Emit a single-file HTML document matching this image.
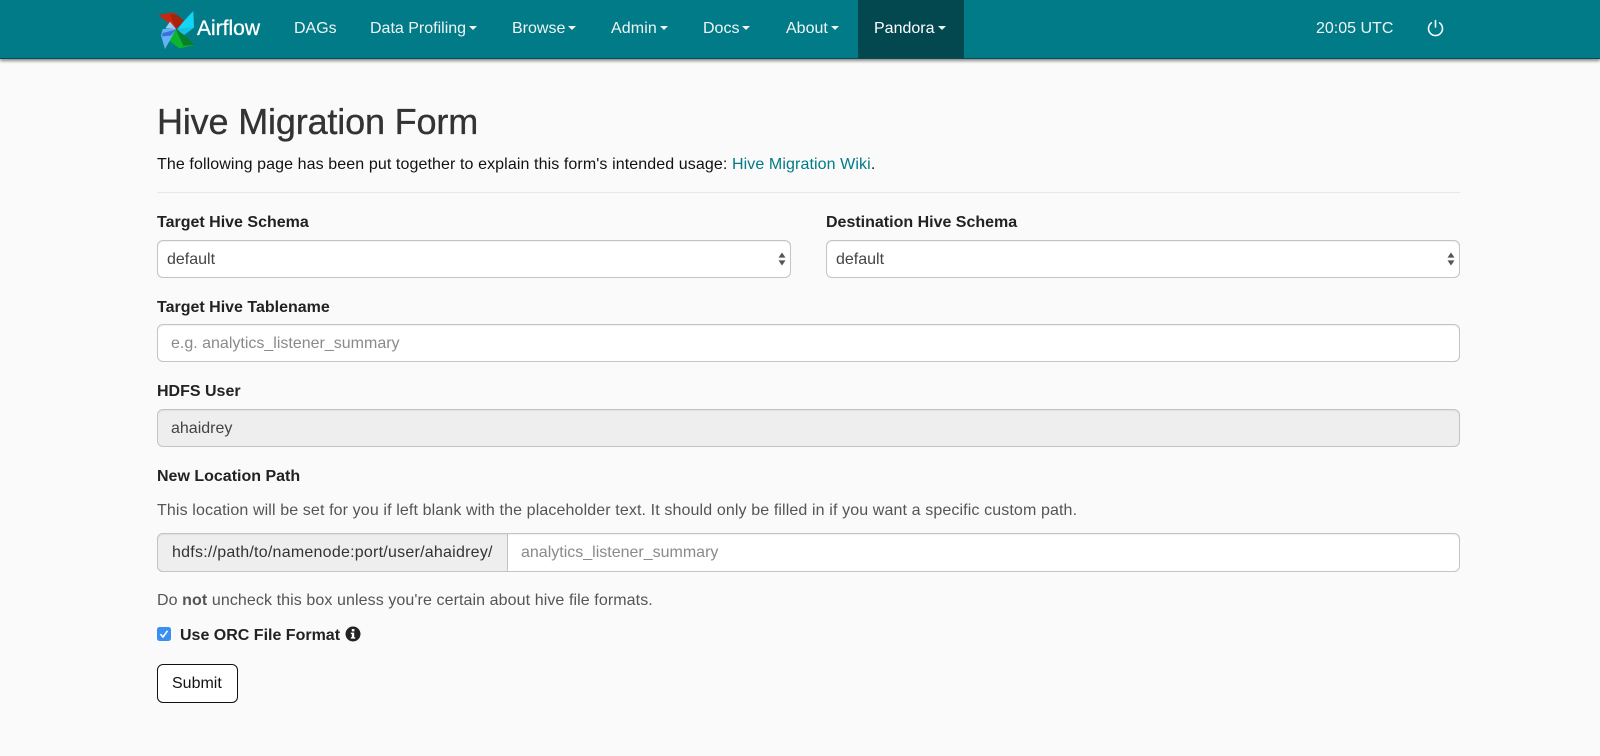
<!DOCTYPE html>
<html>
<head>
<meta charset="utf-8">
<style>
html,body{margin:0;padding:0;width:1600px;height:756px;overflow:hidden;background:#fafafa;font-family:"Liberation Sans",Arial,sans-serif;color:#333}
.t{position:absolute;white-space:nowrap;line-height:20px;font-size:16px}
.nav{position:absolute;left:0;top:0;width:1600px;height:58px;background:#017b87;border-bottom:1px solid #0a4a50;box-shadow:0 2px 3px rgba(0,0,0,.45)}
.n{color:#f0f5f5;top:19px;font-size:16px}
.c::after{content:"";display:inline-block;margin-left:3px;vertical-align:3px;border-top:4px solid #f0f5f5;border-left:4px solid transparent;border-right:4px solid transparent}
.active{position:absolute;left:858px;top:0;width:106px;height:58px;background:#03474f}
.b{font-weight:bold;color:#222}
.box{position:absolute;box-sizing:border-box;background:#fff;border:1px solid #c4c4c4;border-radius:6px;box-shadow:inset 0 1px 1px rgba(0,0,0,.06)}
.v{color:#444}
.ph{color:#8a8a8a}
</style>
</head>
<body>
<div class="nav"></div>
<div class="active"></div>
<svg style="position:absolute;left:150px;top:5px" width="50" height="50" viewBox="0 0 150 150">
<polygon points="25,30 70,22 105,50 78,72" fill="#c9280f"/>
<polygon points="60,28 80,28 105,50 78,72" fill="#a6230e"/>
<polygon points="130,18 132,68 82,72 98,52" fill="#11d6f5"/>
<polygon points="132,68 110,68 82,72 100,92" fill="#16c2e0"/>
<polygon points="135,120 88,130 55,105 78,74" fill="#0bb52e"/>
<polygon points="135,120 100,122 78,74 100,88" fill="#0a7f2a"/>
<polygon points="45,132 33,92 38,72 78,72 62,102" fill="#63b2f6"/>
<polygon points="38,84 78,74 62,92 36,94" fill="#3c6fdc"/>
<polygon points="46,70 60,50 78,72" fill="#9ccdfa"/>
</svg>
<div class="t" style="left:197px;top:17px;font-size:21px;line-height:24px;color:#fff;-webkit-text-stroke:.3px #fff">Airflow</div>
<div class="t n" style="left:294px">DAGs</div>
<div class="t n c" style="left:370px">Data Profiling</div>
<div class="t n c" style="left:512px">Browse</div>
<div class="t n c" style="left:611px;letter-spacing:.1px">Admin</div>
<div class="t n c" style="left:703px">Docs</div>
<div class="t n c" style="left:786px">About</div>
<div class="t n c" style="left:874px;color:#fff">Pandora</div>
<div class="t n" style="left:1316px">20:05 UTC</div>
<svg style="position:absolute;left:1426px;top:18px" width="19" height="20" viewBox="0 0 19 20" fill="none" stroke="#f4f8f8" stroke-width="1.6" stroke-linecap="round"><path d="M5.4 4.9a7 7 0 1 0 8.2 0"/><path d="M9.5 2.5v6.5"/></svg>

<div class="t" style="left:157px;top:100px;font-size:36px;line-height:44px;color:#333;letter-spacing:-.16px;-webkit-text-stroke:.35px #333">Hive Migration Form</div>
<div class="t" style="left:157px;top:155px;color:#111;letter-spacing:.1px">The following page has been put together to explain this form's intended usage: <span style="color:#017b87">Hive Migration Wiki</span>.</div>
<div style="position:absolute;left:157px;top:192px;width:1303px;height:1px;background:#e8e8e8"></div>

<div class="t b" style="left:157px;top:213px">Target Hive Schema</div>
<div class="box" style="left:157px;top:240px;width:634px;height:38px"></div>
<div class="t v" style="left:167px;top:250px">default</div>
<svg style="position:absolute;left:778px;top:252px" width="8" height="14" viewBox="0 0 8 14" fill="#555"><path d="M.5 5.6L4 .5L7.5 5.6Z"/><path d="M.5 8.4L4 13.5L7.5 8.4Z"/></svg>

<div class="t b" style="left:826px;top:213px">Destination Hive Schema</div>
<div class="box" style="left:826px;top:240px;width:634px;height:38px"></div>
<div class="t v" style="left:836px;top:250px">default</div>
<svg style="position:absolute;left:1447px;top:252px" width="8" height="14" viewBox="0 0 8 14" fill="#555"><path d="M.5 5.6L4 .5L7.5 5.6Z"/><path d="M.5 8.4L4 13.5L7.5 8.4Z"/></svg>

<div class="t b" style="left:157px;top:298px">Target Hive Tablename</div>
<div class="box" style="left:157px;top:324px;width:1303px;height:38px"></div>
<div class="t ph" style="left:171px;top:334px">e.g. analytics_listener_summary</div>

<div class="t b" style="left:157px;top:382px">HDFS User</div>
<div class="box" style="left:157px;top:409px;width:1303px;height:38px;background:#eee"></div>
<div class="t v" style="left:171px;top:419px">ahaidrey</div>

<div class="t b" style="left:157px;top:467px">New Location Path</div>
<div class="t" style="left:157px;top:501px;color:#555;letter-spacing:.12px">This location will be set for you if left blank with the placeholder text. It should only be filled in if you want a specific custom path.</div>

<div class="box" style="left:157px;top:533px;width:1303px;height:39px"></div>
<div class="box" style="left:157px;top:533px;width:351px;height:39px;background:#eee;border-radius:6px 0 0 6px"></div>
<div class="t" style="left:172px;top:543px;color:#333;letter-spacing:.24px">hdfs://path/to/namenode:port/user/ahaidrey/</div>
<div class="t ph" style="left:521px;top:543px">analytics_listener_summary</div>

<div class="t" style="left:157px;top:591px;color:#555;letter-spacing:.09px">Do <b>not</b> uncheck this box unless you're certain about hive file formats.</div>

<svg style="position:absolute;left:157px;top:627px" width="14" height="14" viewBox="0 0 14 14"><rect width="14" height="14" rx="2.5" fill="#3b8ff3"/><path d="M3.5 7.2L6 10L10.5 3.8" fill="none" stroke="#fff" stroke-width="1.6"/></svg>
<div class="t b" style="left:180px;top:626px">Use ORC File Format</div>
<svg style="position:absolute;left:345px;top:626px" width="16" height="16" viewBox="0 0 16 16"><circle cx="8" cy="8" r="7.5" fill="#222"/><rect x="6.8" y="3" width="2.6" height="2.4" fill="#fff"/><path d="M5.8 6.6H9.2V11.2H10.2V12.6H5.8V11.2H6.8V8H5.8Z" fill="#fff"/></svg>

<div class="box" style="left:157px;top:664px;width:81px;height:39px;border-color:#111;background:#fff;box-shadow:none"></div>
<div class="t" style="left:172px;top:674px;color:#111">Submit</div>
</body>
</html>
